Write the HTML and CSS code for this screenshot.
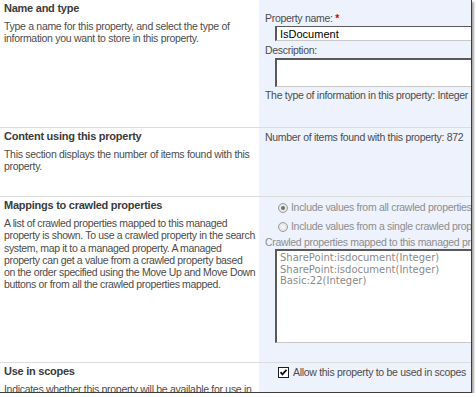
FILE: index.html
```html
<!DOCTYPE html>
<html lang="en">
<head>
  <meta charset="UTF-8">
  <title>Edit Managed Property</title>
  <link rel="stylesheet" href="styles.css">
</head>
<body>
  <div class="frame">
    <div class="section sec-name">
      <div class="desc">
        <h3>Name and type</h3>
        <p>Type a name for this property, and select the type of information you want to store in this property.</p>
      </div>
      <div class="controls">
        <div class="label">Property name: <span class="req">*</span></div>
        <div class="field"><input type="text" class="textbox" value="IsDocument"></div>
        <div class="label">Description:</div>
        <div class="field"><textarea class="textarea"></textarea></div>
        <div class="label">The type of information in this property: Integer</div>
      </div>
    </div>

    <div class="section sec-content">
      <div class="desc">
        <h3>Content using this property</h3>
        <p>This section displays the number of items found with this property.</p>
      </div>
      <div class="controls">
        <div class="label">Number of items found with this property: 872</div>
      </div>
    </div>

    <div class="section sec-map">
      <div class="desc">
        <h3>Mappings to crawled properties</h3>
        <p class="lines">A list of crawled properties mapped to this managed<br>property is shown. To use a crawled property in the search<br>system, map it to a managed property. A managed<br>property can get a value from a crawled property based<br>on the order specified using the Move Up and Move Down<br>buttons or from all the crawled properties mapped.</p>
      </div>
      <div class="controls">
        <div class="option"><span class="radio checked"></span>Include values from all crawled properties mapped</div>
        <div class="option"><span class="radio"></span>Include values from a single crawled property based on the order specified</div>
        <div class="label dim">Crawled properties mapped to this managed property:</div>
        <div class="field">
          <div class="listbox">
            <div>SharePoint:isdocument(Integer)</div>
            <div>SharePoint:isdocument(Integer)</div>
            <div>Basic:22(Integer)</div>
          </div>
        </div>
      </div>
    </div>

    <div class="section sec-scope">
      <div class="desc">
        <h3>Use in scopes</h3>
        <p>Indicates whether this property will be available for use in scopes.</p>
      </div>
      <div class="controls">
        <div class="option">
          <svg class="check" width="11" height="11" viewBox="0 0 11 11">
            <rect x="0.5" y="0.5" width="10" height="10" fill="#fff" stroke="#1c1c1c"/>
            <path d="M2.5 5.2 L4.4 7.3 L8.5 2.8" fill="none" stroke="#111" stroke-width="1.8"/>
          </svg>
          Allow this property to be used in scopes
        </div>
      </div>
    </div>
  </div>
</body>
</html>
```

FILE: styles.css
```css
body {
  margin: 0;
  background: #fff;
  font-family: "Liberation Sans", Arial, sans-serif;
  font-size: 10.5px;
  letter-spacing: -0.3px;
  color: #4c4c4c;
}

.frame {
  width: 471px;
  height: 392px;
  overflow: hidden;
  border-right: 1px solid #3c3c3c;
  border-bottom: 1px solid #3c3c3c;
  box-shadow: 2px 2px 2px rgba(0, 0, 0, 0.35);
}

.section {
  display: flex;
  border-bottom: 1px solid #dcdcdc;
}

.desc {
  width: 254px;
  flex-shrink: 0;
  padding: 2px 1px 0 4px;
}

.desc h3 {
  margin: 0 0 5px;
  font-size: 11px;
  font-weight: bold;
  letter-spacing: -0.25px;
  color: #3b3b3b;
  line-height: 13px;
}

.desc p {
  margin: 0;
  line-height: 12.3px;
}

.desc p.lines {
  white-space: nowrap;
  letter-spacing: -0.35px;
}

.controls {
  flex-shrink: 0;
  width: 360px;
  background: #eef2fd;
  padding: 12px 0 0 6px;
  line-height: 13px;
  white-space: nowrap;
}

.sec-name { height: 127px; }
.sec-content { height: 68px; }
.sec-content .controls { padding-top: 3px; }
.sec-map { height: 165px; }
.sec-map .controls { padding-top: 1px; }
.sec-scope { height: 40px; border-bottom: none; }
.sec-scope .controls { padding-top: 0; }

.req {
  color: #e00000;
  font-weight: bold;
}

.field {
  padding-left: 10px;
}

.textbox {
  display: block;
  box-sizing: border-box;
  width: 260px;
  height: 15px;
  margin: 1px 0 3px;
  padding: 0 3px;
  border: 1px solid #c8c8c8;
  border-top-color: #5a5a5a;
  border-left: 2px solid #5a5a5a;
  font-family: "Liberation Sans", Arial, sans-serif;
  font-size: 11px;
  color: #000;
  background: #fff;
}

.textarea {
  display: block;
  box-sizing: border-box;
  width: 260px;
  height: 29px;
  margin: 1px 0 2px;
  border: 1px solid #c8c8c8;
  border-top: 2px solid #5a5a5a;
  border-left: 2px solid #5a5a5a;
  resize: none;
  background: #fff;
}

.option {
  display: flex;
  align-items: center;
  padding-left: 13px;
  height: 19px;
  color: #8d8d8d;
}

.sec-scope .option {
  color: #4c4c4c;
}

.radio {
  width: 10px;
  height: 10px;
  margin-right: 3px;
  border-radius: 50%;
  border: 1px solid #9c9c9c;
  background: radial-gradient(circle, #fafafa 0, #d6d6d6 100%);
  box-sizing: border-box;
  position: relative;
  flex-shrink: 0;
}

.radio.checked::after {
  content: "";
  position: absolute;
  left: 2px;
  top: 2px;
  width: 4px;
  height: 4px;
  border-radius: 50%;
  background: #707070;
}

.check {
  margin-right: 4px;
  flex-shrink: 0;
}

.dim {
  color: #8d8d8d;
}

.listbox {
  box-sizing: border-box;
  width: 260px;
  height: 94px;
  padding: 1px 3px;
  border: 1px solid #c8c8c8;
  border-top: 2px solid #5a5a5a;
  border-left: 2px solid #5a5a5a;
  background: #fff;
  font-family: "DejaVu Sans", sans-serif;
  font-size: 10px;
  letter-spacing: 0;
  line-height: 11.5px;
  color: #8a8a8a;
}
```
